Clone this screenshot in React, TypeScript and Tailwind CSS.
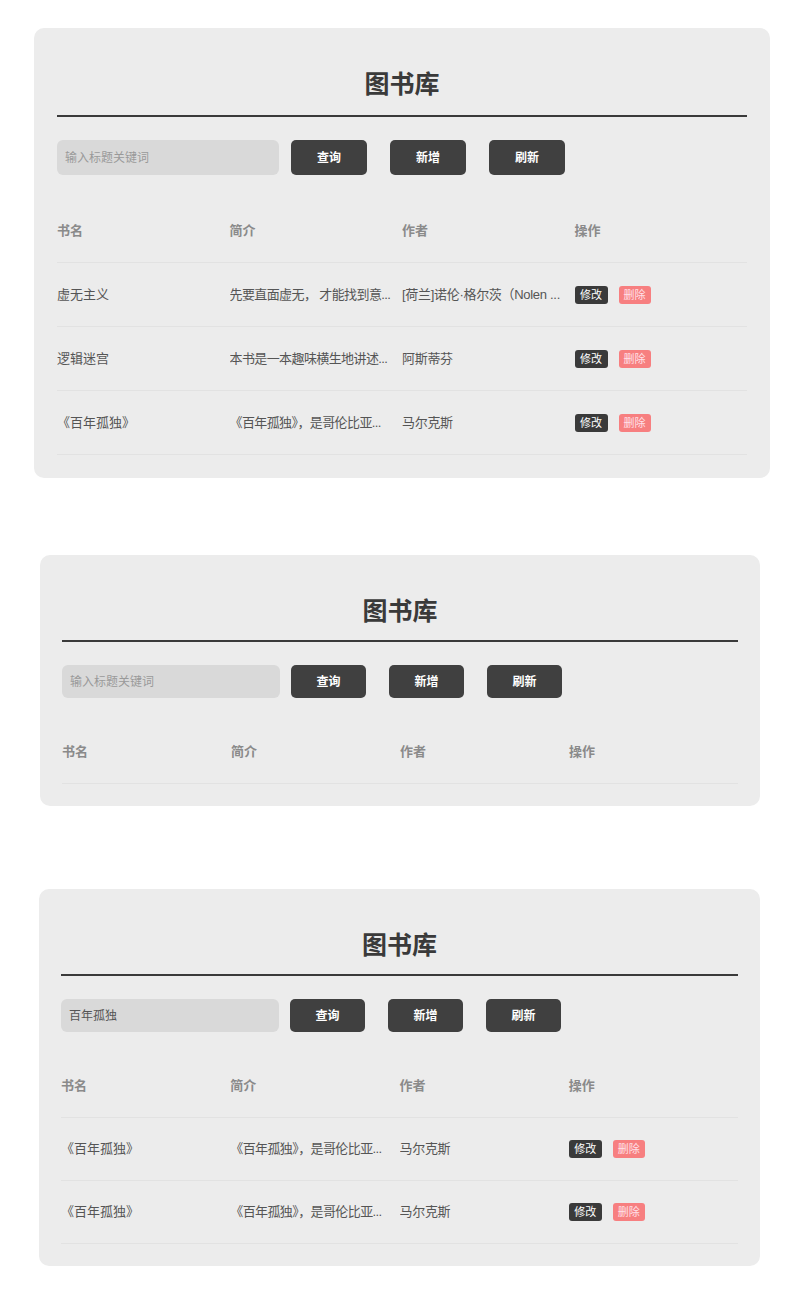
import React, { useState } from 'react';

type Book = { title: string; intro: string; author: string };

// list cells show the cut-down text, as the page renders it
const allBooks: Book[] = [
  { title: '虚无主义', intro: '先要直面虚无， 才能找到意...', author: '[荷兰]诺伦·格尔茨（Nolen ...' },
  { title: '逻辑迷宫', intro: '本书是一本趣味横生地讲述...', author: '阿斯蒂芬' },
  { title: '《百年孤独》', intro: '《百年孤独》，是哥伦比亚...', author: '马尔克斯' },
];

const solitude = allBooks[2];

const font = { fontFamily: '"Liberation Sans", "Noto Sans CJK SC", sans-serif' };

type PanelProps = {
  books: Book[];
  keyword?: string;
  small?: boolean;
  className: string;
};

const Library: React.FC<PanelProps> = ({ books, keyword = '', small = false, className }) => {
  const [query, setQuery] = useState(keyword);

  const pad = small ? 'px-[22px] pt-[39px] pb-[22px]' : 'px-[23px] pt-[39px] pb-[23px]';
  const titleBox = small ? 'pb-[12px]' : 'pb-[14px]';
  const toolbar = small ? 'mt-[23px] h-[33px] gap-[11px]' : 'mt-[23px] h-[35px] gap-[12px]';
  const inputW = small ? 'w-[218px]' : 'w-[222px]';
  const btnW = small ? 'w-[75px]' : 'w-[76px]';
  const table = small ? 'mt-[23px]' : 'mt-[24px]';
  const rowH = small ? 'h-[63px]' : 'h-[64px]';

  return (
    <div className={`rounded-[10px] bg-[#ececec] ${pad} ${className}`} style={font}>
      <div className={`border-b-2 border-[#3a3a3a] ${titleBox}`}>
        <h1 className="text-center text-[25px] leading-[34px] font-bold text-[#3a3a3a]">图书库</h1>
      </div>

      <div className={`flex items-stretch ${toolbar}`}>
        <input
          value={query}
          onChange={e => setQuery(e.target.value)}
          placeholder="输入标题关键词"
          className={`${inputW} rounded-[6px] bg-[#d9d9d9] px-[8px] text-[12px] text-[#555] placeholder:text-[#999] outline-none`}
        />
        <div className="flex gap-[23px]">
          {['查询', '新增', '刷新'].map(label => (
            <button
              key={label}
              className={`${btnW} rounded-[5px] bg-[#404040] text-[12px] font-semibold text-white`}
            >
              {label}
            </button>
          ))}
        </div>
      </div>

      <div className={table}>
        <div className={`grid grid-cols-4 items-center border-b border-[#e2e2e2] ${rowH}`}>
          {['书名', '简介', '作者', '操作'].map(h => (
            <div key={h} className="text-[13px] font-bold text-[#8a8a8a]">{h}</div>
          ))}
        </div>
        {books.map((b, i) => (
          <div key={i} className={`grid grid-cols-4 items-center border-b border-[#e2e2e2] text-[13px] text-[#555] ${rowH}`}>
            <div className="overflow-hidden whitespace-nowrap">{b.title}</div>
            <div className="overflow-hidden whitespace-nowrap tracking-[-0.6px]">{b.intro}</div>
            <div className="overflow-hidden whitespace-nowrap tracking-[-0.3px]">{b.author}</div>
            <div className="flex gap-[11px]">
              <button className="h-[18px] w-[33px] rounded-[3px] bg-[#3a3a3a] text-[11px] leading-[18px] text-white">修改</button>
              <button className="h-[18px] w-[32px] rounded-[3px] bg-[#f77f80] text-[11px] leading-[18px] text-[#ffe1e8]">删除</button>
            </div>
          </div>
        ))}
      </div>
    </div>
  );
};

const App: React.FC = () => {
  return (
    <div className="min-h-[1301px] bg-white pt-[28px] pb-[36px]">
      <Library books={allBooks} className="ml-[34px] w-[736px]" />
      <Library books={[]} small className="ml-[40px] mt-[77px] w-[720px]" />
      <Library books={[solitude, solitude]} keyword="百年孤独" small className="ml-[39px] mt-[83px] w-[721px]" />
    </div>
  );
};

export default App;
